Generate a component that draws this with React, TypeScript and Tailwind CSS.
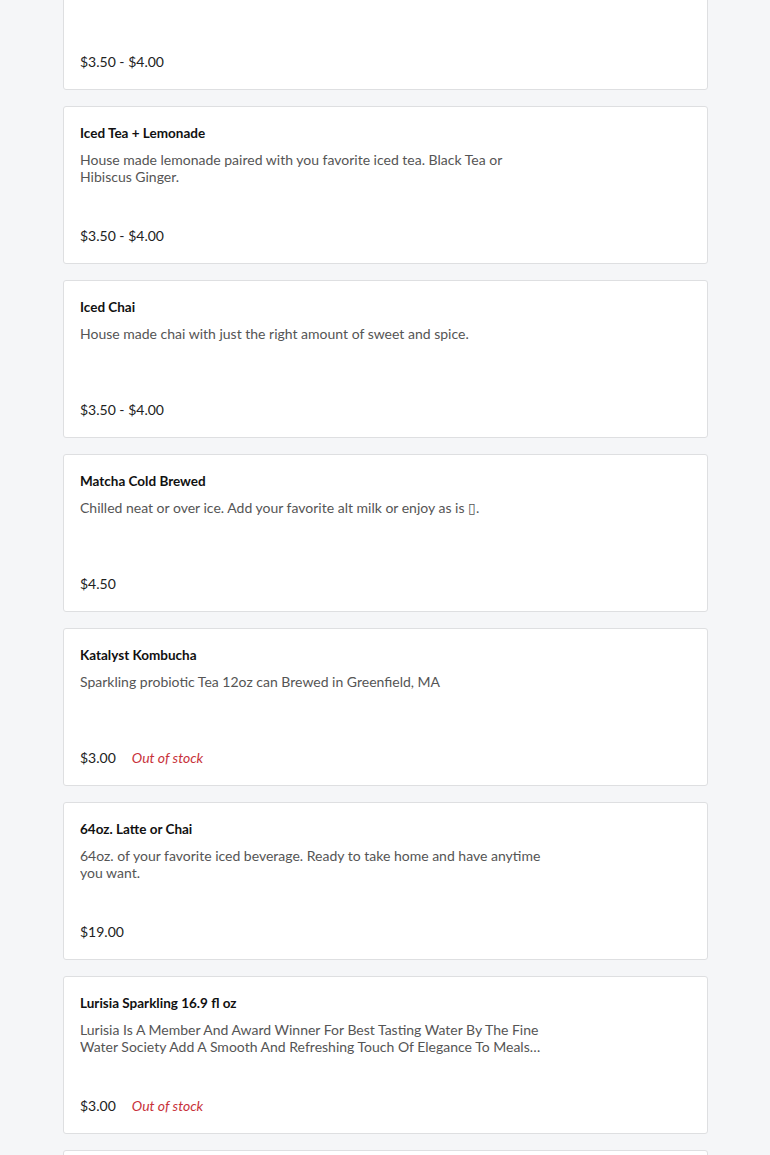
type Item = {
  name: string
  description: string
  price: string
  outOfStock?: boolean
}

const ITEMS: Item[] = [
  {
    name: 'Iced Latte',
    description: 'Double shot of espresso poured over ice with your choice of milk.',
    price: '$3.50 - $4.00',
  },
  {
    name: 'Iced Tea + Lemonade',
    description: 'House made lemonade paired with you favorite iced tea. Black Tea or Hibiscus Ginger.',
    price: '$3.50 - $4.00',
  },
  {
    name: 'Iced Chai',
    description: 'House made chai with just the right amount of sweet and spice.',
    price: '$3.50 - $4.00',
  },
  {
    name: 'Matcha Cold Brewed',
    description: 'Chilled neat or over ice. Add your favorite alt milk or enjoy as is \u25AF.',
    price: '$4.50',
  },
  {
    name: 'Katalyst Kombucha',
    description: 'Sparkling probiotic Tea 12oz can Brewed in Greenfield, MA',
    price: '$3.00',
    outOfStock: true,
  },
  {
    name: '64oz. Latte or Chai',
    description: '64oz. of your favorite iced beverage. Ready to take home and have anytime you want.',
    price: '$19.00',
  },
  {
    name: 'Lurisia Sparkling 16.9 fl oz',
    description:
      'Lurisia Is A Member And Award Winner For Best Tasting Water By The Fine Water Society Add A Smooth And Refreshing Touch Of Elegance To Meals And Moments Alike.',
    price: '$3.00',
    outOfStock: true,
  },
  {
    name: 'Lurisia Still 16.9 fl oz',
    description: 'Naturally pure still mineral water from the Italian Alps.',
    price: '$3.00',
  },
]

function MenuCard({ item }: { item: Item }) {
  return (
    <div className="flex h-[158px] flex-col rounded-[3px] border border-[#dedfe1] bg-white px-4 pt-4 pb-[17px]">
      <h3 className="h-5 text-[13.5px] font-bold leading-5 text-[#111]">{item.name}</h3>
      <p className="mt-2 line-clamp-2 max-w-[462px] text-[14px] leading-[17px] text-[#555]">
        {item.description}
      </p>
      <div className="mt-auto flex items-center gap-4 text-[14px] leading-5 text-[#222]">
        <span>{item.price}</span>
        {item.outOfStock && <span className="italic text-[#c8323a]">Out of stock</span>}
      </div>
    </div>
  )
}

export default function App() {
  return (
    <div className="h-[1155px] overflow-hidden bg-[#f5f6f8] pl-[63px] pr-[62px] font-['Lato','Liberation_Sans',sans-serif]">
      <div className="-mt-[68px] flex flex-col gap-4">
        {ITEMS.map((item) => (
          <MenuCard key={item.name} item={item} />
        ))}
      </div>
    </div>
  )
}
